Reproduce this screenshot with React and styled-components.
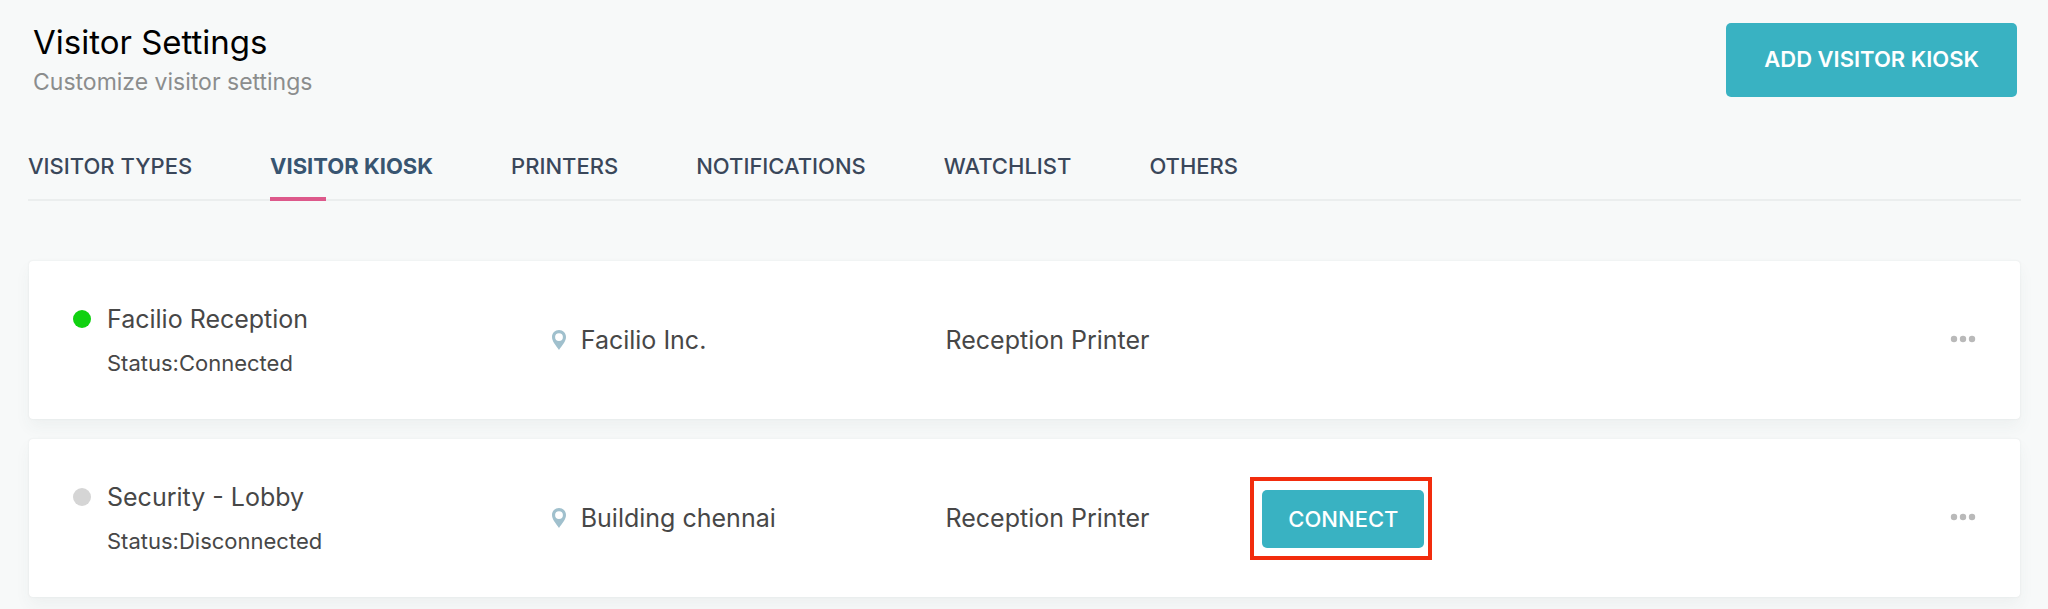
import React, { useState } from "react";
import styled, { createGlobalStyle } from "styled-components";

const GlobalStyle = createGlobalStyle`
    * {
        box-sizing: border-box;
    }

    html {
        min-height: 100%;
        background: #f7f9f9;
    }

    body {
        margin: 0;
        color: #474747;
        font-family: Inter, "Liberation Sans", sans-serif;
        overflow-x: hidden;
    }
`;

const PageStyled = styled.main`
    padding: 23px 27px 20px 28px;
`;

const HeaderStyled = styled.header`
    display: flex;
    justify-content: space-between;
    align-items: flex-start;
    padding: 0 4px 0 5px;
`;

const TitleStyled = styled.h1`
    margin: 0;
    color: #000;
    font-size: 33px;
    font-weight: 400;
    line-height: 38px;
`;

const SubtitleStyled = styled.p`
    margin: 7px 0 0;
    color: #8b8d8d;
    font-size: 23px;
    line-height: 28px;
`;

const ButtonStyled = styled.button`
    padding: ${({ $small }) => ($small ? "15px 26px" : "22px 38px 24px")};
    border: 0;
    border-radius: 5px;
    background: #39b2c2;
    color: #fff;
    font-family: inherit;
    font-size: 22px;
    font-weight: ${({ $small }) => ($small ? 500 : 600)};
    line-height: 28px;
    white-space: nowrap;
    text-transform: uppercase;
    cursor: pointer;
`;

const TabsStyled = styled.nav`
    display: flex;
    gap: 78px;
    margin-top: 55px;
    border-bottom: 2px solid #ebeeee;
`;

const TabStyled = styled.a`
    position: relative;
    padding-bottom: 19px;
    color: ${({ $active }) => ($active ? "#385571" : "#3a475a")};
    font-size: 22px;
    font-weight: ${({ $active }) => ($active ? 700 : 500)};
    line-height: 28px;
    text-decoration: none;
    text-transform: uppercase;
    white-space: nowrap;

    &::after {
        content: "";
        display: ${({ $active }) => ($active ? "block" : "none")};
        position: absolute;
        left: 0;
        bottom: -2px;
        width: 56px;
        height: 4px;
        background: #dd598b;
    }
`;

const ListStyled = styled.ul`
    display: grid;
    gap: 20px;
    margin: 60px 0 0;
    padding: 0 1px;
    list-style: none;
`;

const CardStyled = styled.li`
    display: grid;
    grid-template-columns: 479fr 394fr 305fr 700fr 26px;
    align-items: center;
    min-height: 158px;
    padding: 24px 44px;
    border-radius: 4px;
    background: #fff;
    box-shadow: 0 8px 16px rgba(60, 80, 80, 0.05), 0 0 2px rgba(60, 80, 80, 0.1);
`;

const KioskStyled = styled.div`
    display: grid;
    grid-template-columns: 18px 1fr;
    column-gap: 16px;
    row-gap: 14px;
    align-items: center;
`;

const DotStyled = styled.span`
    width: 18px;
    height: 18px;
    border-radius: 50%;
    background: ${({ $online }) => ($online ? "#10d110" : "#d5d5d5")};
`;

const TextStyled = styled.span`
    font-size: 25px;
    line-height: 32px;
`;

const StatusStyled = styled.span`
    grid-column: 2;
    font-size: 22px;
    line-height: 28px;
`;

const LocationStyled = styled.div`
    display: flex;
    align-items: center;
    gap: 15px;
`;

const HighlightStyled = styled.div`
    width: fit-content;
    padding: 9px 4px 8px 8px;
    border: 4px solid #f22c0d;
`;

const MoreStyled = styled.button`
    grid-column: 5;
    display: flex;
    justify-content: center;
    padding: 8px 0 10px;
    border: 0;
    background: none;
    color: #b9b9b9;
    cursor: pointer;
`;

const PinIcon = () => (
    <svg width="14" height="20" viewBox="0 0 14 20" fill="#a0c0cd" aria-hidden="true">
        <path
            fillRule="evenodd"
            d="M7 0C3 0 0 3 0 7c0 4.600 4 8.500 7 13 3-4.500 7-8.400 7-13 0-4-3-7-7-7Zm0 3.200a3.900 3.900 0 1 1 0 7.800 3.900 3.900 0 0 1 0-7.800Z"
        />
    </svg>
);

const MoreIcon = () => (
    <svg width="26" height="8" viewBox="0 0 26 8" fill="currentColor" aria-hidden="true">
        <circle cx="4" cy="4" r="3.200" />
        <circle cx="13" cy="4" r="3.200" />
        <circle cx="22" cy="4" r="3.200" />
    </svg>
);

const tabs = ["Visitor Types", "Visitor Kiosk", "Printers", "Notifications", "Watchlist", "Others"];

const kiosks = [
    { name: "Facilio Reception", online: true, location: "Facilio Inc.", printer: "Reception Printer" },
    { name: "Security - Lobby", online: false, location: "Building chennai", printer: "Reception Printer" },
];

const KioskCard = ({ kiosk }) => {
    return (
        <CardStyled>
            <KioskStyled>
                <DotStyled $online={kiosk.online} />
                <TextStyled>{kiosk.name}</TextStyled>
                <StatusStyled>Status:{kiosk.online ? "Connected" : "Disconnected"}</StatusStyled>
            </KioskStyled>
            <LocationStyled>
                <PinIcon />
                <TextStyled>{kiosk.location}</TextStyled>
            </LocationStyled>
            <TextStyled>{kiosk.printer}</TextStyled>
            {!kiosk.online && (
                <HighlightStyled>
                    <ButtonStyled type="button" $small>Connect</ButtonStyled>
                </HighlightStyled>
            )}
            <MoreStyled type="button" aria-label={"More options for " + kiosk.name}>
                <MoreIcon />
            </MoreStyled>
        </CardStyled>
    );
};

const App = () => {
    const [active, setActive] = useState("Visitor Kiosk");

    return (
        <>
            <GlobalStyle />
            <PageStyled>
                <HeaderStyled>
                    <div>
                        <TitleStyled>Visitor Settings</TitleStyled>
                        <SubtitleStyled>Customize visitor settings</SubtitleStyled>
                    </div>
                    <ButtonStyled type="button">Add Visitor Kiosk</ButtonStyled>
                </HeaderStyled>
                <TabsStyled>
                    {tabs.map((tab) => (
                        <TabStyled
                            key={tab}
                            href="#"
                            $active={tab === active}
                            aria-current={tab === active ? "page" : undefined}
                            onClick={() => setActive(tab)}
                        >
                            {tab}
                        </TabStyled>
                    ))}
                </TabsStyled>
                <ListStyled>
                    {kiosks.map((kiosk) => (
                        <KioskCard key={kiosk.name} kiosk={kiosk} />
                    ))}
                </ListStyled>
            </PageStyled>
        </>
    );
};

export default App;
